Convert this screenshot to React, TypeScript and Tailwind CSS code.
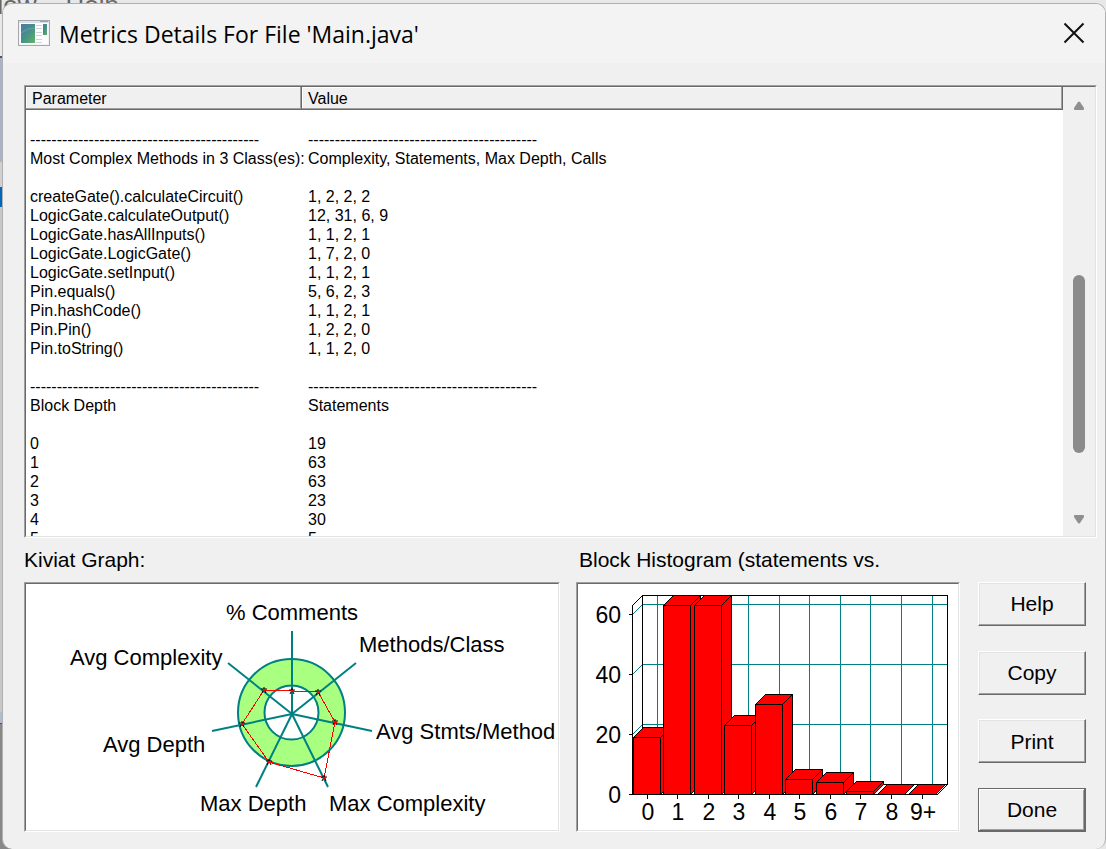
import type { ReactNode } from "react";

const METHODS = [
  ["createGate().calculateCircuit()", "1, 2, 2, 2"],
  ["LogicGate.calculateOutput()", "12, 31, 6, 9"],
  ["LogicGate.hasAllInputs()", "1, 1, 2, 1"],
  ["LogicGate.LogicGate()", "1, 7, 2, 0"],
  ["LogicGate.setInput()", "1, 1, 2, 1"],
  ["Pin.equals()", "5, 6, 2, 3"],
  ["Pin.hashCode()", "1, 1, 2, 1"],
  ["Pin.Pin()", "1, 2, 2, 0"],
  ["Pin.toString()", "1, 1, 2, 0"],
];

const DEPTHS = [
  ["0", "19"],
  ["1", "63"],
  ["2", "63"],
  ["3", "23"],
  ["4", "30"],
  ["5", "5"],
];

const RULE = "-".repeat(43);

const ROWS = [
  [RULE, RULE],
  ["Most Complex Methods in 3 Class(es):", "Complexity, Statements, Max Depth, Calls"],
  ["", ""],
  ...METHODS,
  ["", ""],
  [RULE, RULE],
  ["Block Depth", "Statements"],
  ["", ""],
  ...DEPTHS,
];

const Sunken = ({ className, children }: { className: string; children: ReactNode }) => (
  <div className={`border border-t-[#a0a0a0] border-l-[#a0a0a0] border-r-white border-b-white ${className}`}>
    <div className="flex h-full border border-t-[#696969] border-l-[#696969] border-r-[#e3e3e3] border-b-[#e3e3e3] bg-white">
      {children}
    </div>
  </div>
);

const AppIcon = () => (
  <svg width="32" height="26" viewBox="0 0 32 26" aria-hidden="true">
    <defs>
      <linearGradient id="pane" x1="0" y1="0" x2="1" y2="1">
        <stop offset="0" stopColor="#4a7ba6" />
        <stop offset="0.5" stopColor="#469089" />
        <stop offset="1" stopColor="#62b463" />
      </linearGradient>
    </defs>
    <rect x="0.5" y="0.5" width="31" height="25" fill="#f0f2f4" stroke="#a3a9ae" />
    <rect x="1" y="1" width="30" height="2" fill="#dde1e5" />
    <path d="M22 1.500H30" stroke="#9aa5ae" />
    <rect x="2" y="3" width="28" height="21" fill="#fdfdfd" />
    <rect x="3" y="4" width="14" height="19" fill="url(#pane)" />
    <path d="M3 13Q9 8 17 8" stroke="#7fb0b0" fill="none" opacity=".6" />
    <path d="M18 5.500h6M18 8.500h6M18 12.500h6M18 15.500h6M18 19.500h6M18 22.500h6" stroke="#d0d3d6" />
    <rect x="25" y="4" width="4" height="11" fill="url(#pane)" />
  </svg>
);

const MetricsList = () => (
  <Sunken className="h-[453px]">
    <div className="min-w-0 flex-1 overflow-hidden">
      <table className="w-full table-fixed border-separate border-spacing-0 text-left text-base leading-[19px]">
        <colgroup>
          <col className="w-[276px]" />
          <col />
        </colgroup>
        <thead>
          <tr className="h-[23px] bg-[#f0f0f0]">
            {["Parameter", "Value"].map((h) => (
              <th
                key={h}
                className="border-r border-b border-[#696969] p-0 pl-[6px] font-normal shadow-[inset_-1px_-1px_#a0a0a0,inset_1px_1px_#fff]"
              >
                {h}
              </th>
            ))}
          </tr>
        </thead>
        <tbody>
          <tr className="h-5">
            <td colSpan={2} />
          </tr>
          {ROWS.map(([name, value], i) => (
            <tr key={i} className="h-[19px] whitespace-nowrap">
              <td className="p-0 pl-1">{name}</td>
              <td className="p-0 pl-[6px]">{value}</td>
            </tr>
          ))}
        </tbody>
      </table>
    </div>
    <div className="flex w-8 shrink-0 flex-col items-center bg-[#f0f0f0] pt-[14px] pb-3">
      <svg width="12" height="9" viewBox="0 0 12 9" aria-hidden="true">
        <path d="M5 1Q6 0 7 1L11 7Q11.500 9 10 9H2Q.5 9 1 7Z" fill="#8f8f8f" />
      </svg>
      <div className="mt-[165px] h-[178px] w-3 rounded-full bg-[#8b8b8b]" />
      <svg className="mt-auto" width="12" height="9" viewBox="0 0 12 9" aria-hidden="true">
        <path d="M5 8Q6 9 7 8L11 2Q11.500 0 10 0H2Q.5 0 1 2Z" fill="#8f8f8f" />
      </svg>
    </div>
  </Sunken>
);

// axis end points, plotted points and captions are relative to the chart panel
const AXES = [[266, 47], [330, 79], [346, 147], [302, 203], [230, 203], [186, 147], [202, 79]];
const POINTS = [[266, 107], [292, 108], [309, 138], [298, 194], [243, 178], [216, 140], [238, 106]];
const CAPTIONS: [string, number, number][] = [
  ["% Comments", 200, 36],
  ["Methods/Class", 333, 68],
  ["Avg Stmts/Method", 350, 155],
  ["Max Complexity", 303, 227],
  ["Max Depth", 174, 227],
  ["Avg Depth", 77, 168],
  ["Avg Complexity", 44, 81],
];

const KiviatGraph = () => (
  <svg width="532" height="246" viewBox="0 0 532 246" role="img" aria-label="Kiviat graph">
    <circle cx="265.500" cy="128.500" r="53.500" fill="#a8ff80" stroke="#008080" strokeWidth="2" />
    <circle cx="265.500" cy="128.500" r="27" fill="#fff" stroke="#008080" strokeWidth="2" />
    {AXES.map(([x, y]) => (
      <line key={`${x}-${y}`} x1="266" y1="130" x2={x} y2={y} stroke="#008080" strokeWidth="2" />
    ))}
    <polygon
      points={POINTS.map((p) => p.join(",")).join(" ")}
      fill="none"
      stroke="#f00"
      shapeRendering="crispEdges"
    />
    {POINTS.map(([x, y]) => (
      <g key={`${x}-${y}`} transform={`translate(${x} ${y})`}>
        <path d="M-3-1H3M0-3V1M-2 3L0-1L2 3" stroke="#000" fill="none" />
        <path d="M-1 0H2" stroke="#f00" strokeWidth="2" />
      </g>
    ))}
    {CAPTIONS.map(([label, x, y]) => (
      <text key={label} x={x} y={y} fontSize="22">
        {label}
      </text>
    ))}
  </svg>
);

const BARS = [
  { label: "0", x: 55, top: 153 },
  { label: "1", x: 85, top: 21 },
  { label: "2", x: 116, top: 21 },
  { label: "3", x: 146, top: 141 },
  { label: "4", x: 177, top: 120 },
  { label: "5", x: 207, top: 195 },
  { label: "6", x: 238, top: 198 },
  { label: "7", x: 268, top: 207 },
  { label: "8", x: 299, top: 210 },
  { label: "9+", x: 330, top: 210 },
];

const BASE = 210;

const BlockHistogram = () => (
  <svg width="380" height="246" viewBox="0 0 380 246" role="img" aria-label="Block histogram">
    <g transform="translate(.5 .5)" fill="none" stroke="#008080" shapeRendering="crispEdges">
      {[20, 80, 140].map((y) => (
        <path key={y} d={`M54 ${y + 10}L64 ${y}H369`} />
      ))}
      {BARS.map((b) => (
        <path key={b.label} d={`M${b.x + 24} 11V200`} />
      ))}
      <path stroke="#000" d="M54 210V21L64 11H369V200L359 210M64 11V200H369" />
      {[30, 90, 150].map((y) => (
        <path key={y} stroke="#000" d={`M50 ${y}H54`} />
      ))}
    </g>
    <g transform="translate(.5 .5)" fill="#f00" stroke="#000" shapeRendering="crispEdges">
      {BARS.map(({ label, x, top }) => (
        <g key={label}>
          <path d={`M${x} ${top}l10-10h27l-10 10z`} />
          {top < BASE && <path d={`M${x + 27} ${top}l10-10V${BASE - 10}l-10 10z`} />}
          {top < BASE && <path d={`M${x} ${top}h27V${BASE}h-27z`} />}
          <path d={`M${x + 14} ${BASE}v4`} />
        </g>
      ))}
      <path d="M50 210H359" />
    </g>
    <g fontSize="23" textAnchor="middle">
      {BARS.map((b) => (
        <text key={b.label} x={b.x + 15} y="236">
          {b.label}
        </text>
      ))}
    </g>
    <g fontSize="23" textAnchor="end">
      {["60", "40", "20", "0"].map((n, i) => (
        <text key={n} x="43" y={39 + i * 60}>
          {n}
        </text>
      ))}
    </g>
  </svg>
);

const DialogButton = ({ label, isDefault }: { label: string; isDefault?: boolean }) => (
  <button
    type="button"
    className={
      isDefault
        ? "h-11 w-full border border-[#696969] bg-[#f0f0f0] text-[21px] shadow-[inset_-1px_-1px_#696969,inset_1px_1px_#fff,inset_-2px_-2px_#a0a0a0]"
        : "h-11 w-full border border-t-white border-l-white border-r-[#696969] border-b-[#696969] bg-[#f0f0f0] text-[21px] shadow-[inset_-1px_-1px_#a0a0a0,inset_1px_1px_#e3e3e3]"
    }
  >
    {label}
  </button>
);

export default function App() {
  return (
    <div className="relative flex min-h-screen flex-col overflow-hidden bg-[#e8e8e8] pt-[3px] pl-[2px] font-['Liberation_Sans',sans-serif] text-black">
      {/* the parent window shows past the dialog's edges */}
      <div className="absolute inset-0" aria-hidden="true">
        <div className="-ml-[56px] flex h-14 gap-[29px] text-[26px] leading-6 text-[#666]">
          <span className="-mt-[7px]">Window</span>
          <span className="-mt-[7px]">Help</span>
        </div>
        <div className="h-[106px] w-1 border-t-2 border-[#555] bg-[#a9b5c6]" />
        <div className="h-[25px] w-1 bg-[#d0d0d0]" />
        <div className="h-5 w-1 bg-[#0067c0]" />
        <div className="h-[505px] w-1 bg-[#c8c8c8]" />
        <div className="h-3 w-1 border-b border-[#555] bg-[#aebccd]" />
        <div className="h-[125px] w-3 bg-[#888]" />
      </div>

      <main className="relative flex flex-1 flex-col rounded-[10px] border border-b-0 border-[#b0b0b0] bg-[#f0f0f0]">
        <header className="flex h-[59px] items-center rounded-t-[9px] bg-[#f3f3f3] pr-5 pb-[2px] pl-[15px]">
          <AppIcon />
          <h1 className="ml-[9px] flex-1 pt-1 font-['Open_Sans',sans-serif] text-[23px]">
            Metrics Details For File 'Main.java'
          </h1>
          <button type="button" aria-label="Close">
            <svg width="22" height="22" viewBox="0 0 22 22" aria-hidden="true">
              <path d="M1.500 1.500L20.500 20.500M20.500 1.500L1.500 20.500" stroke="#111" strokeWidth="2" />
            </svg>
          </button>
        </header>

        <div className="flex flex-col pt-[22px] pr-2 pl-[21px]">
          <MetricsList />
          <div className="flex pr-[11px]">
            <section className="min-w-0 flex-1">
              <h2 className="flex h-11 items-center text-[21px]">Kiviat Graph:</h2>
              <Sunken className="h-[250px] overflow-hidden">
                <KiviatGraph />
              </Sunken>
            </section>
            <section className="ml-4 w-96">
              <h2 className="flex h-11 items-center pl-[3px] text-[21px]">Block Histogram (statements vs.</h2>
              <Sunken className="h-[250px] overflow-hidden">
                <BlockHistogram />
              </Sunken>
            </section>
            <div className="ml-[18px] flex w-[108px] flex-col justify-between pt-11">
              <DialogButton label="Help" />
              <DialogButton label="Copy" />
              <DialogButton label="Print" />
              <DialogButton label="Done" isDefault />
            </div>
          </div>
        </div>
      </main>
    </div>
  );
}
